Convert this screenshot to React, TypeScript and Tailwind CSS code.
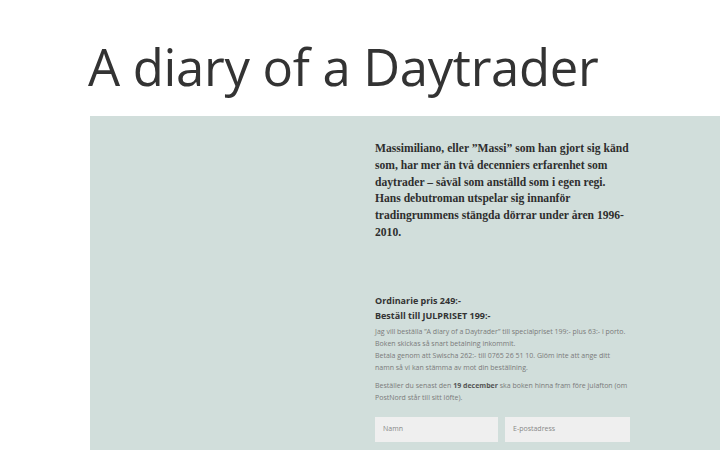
export default function App() {
  const serif = { fontFamily: '"Liberation Serif", "DejaVu Serif", serif' };
  return (
    <div className="w-[720px] h-[450px] overflow-hidden bg-white" style={{ fontFamily: '"Open Sans", sans-serif' }}>
      <h1 className="pl-[88px] pt-[35px] h-[116px] text-[50.8px] leading-[64px] text-[#333333] font-normal tracking-[-0.3px]">
        A diary of a Daytrader
      </h1>
      <div className="ml-[90px] h-[334px] bg-[#d1dedb] flex">
        <div className="w-[285px] shrink-0" />
        <div className="w-[256px] pt-[25px]">
          <div className="text-[11.6px] leading-[16.8px] font-bold text-[#2e2e2e] whitespace-nowrap" style={serif}>
            <div>Massimiliano, eller ”Massi”  som han gjort sig känd</div>
            <div>som, har mer än två decenniers erfarenhet som</div>
            <div>daytrader – såväl som anställd som i egen regi.</div>
            <div>Hans debutroman utspelar sig innanför</div>
            <div>tradingrummens stängda dörrar under åren 1996-</div>
            <div>2010.</div>
          </div>
          <div className="mt-[51px] text-[9px] leading-[15px] font-bold text-[#333333]">
            <div>Ordinarie pris 249:-</div>
            <div>Beställ till JULPRISET 199:-</div>
          </div>
          <div className="mt-[3px] text-[7px] leading-[12px] text-[#7a7a7a] whitespace-nowrap">
            <div>Jag vill beställa ”A diary of a Daytrader” till specialpriset 199:- plus 63:- i porto.</div>
            <div>Boken skickas så snart betalning inkommit.</div>
            <div>Betala genom att Swischa 262:- till 0765 26 51 10. Glöm inte att ange ditt</div>
            <div>namn så vi kan stämma av mot din beställning.</div>
            <div className="mt-[6px]">
              Beställer du senast den <span className="font-bold text-[#555555]">19 december</span> ska boken hinna fram  före julafton (om
            </div>
            <div>PostNord står till sitt löfte).</div>
          </div>
          <div className="mt-[13px] flex gap-[7px]">
            <div className="w-[123px] h-[25px] bg-[#efefef] flex items-center pl-[8px] text-[7px] text-[#888888]">Namn</div>
            <div className="w-[125px] h-[25px] bg-[#efefef] flex items-center pl-[8px] text-[7px] text-[#888888]">E-postadress</div>
          </div>
        </div>
      </div>
    </div>
  );
}
